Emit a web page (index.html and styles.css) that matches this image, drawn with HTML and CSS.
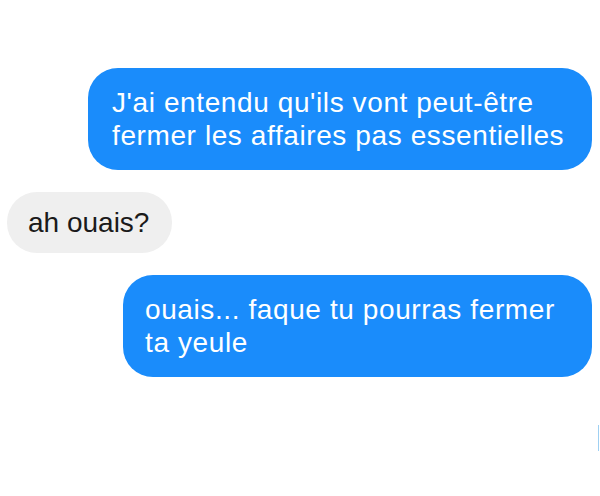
FILE: index.html
```html
<!DOCTYPE html>
<html lang="fr">
<head>
    <meta charset="UTF-8">
    <title>Messages</title>
    <link rel="stylesheet" href="styles.css">
</head>
<body>
    <div class="chat">
        <div class="bubble sent">J'ai entendu qu'ils vont peut-être<br>fermer les affaires pas essentielles</div>
        <div class="bubble received">ah ouais?</div>
        <div class="bubble sent sent-short">ouais... faque tu pourras fermer<br>ta yeule</div>
    </div>
    <div class="edge"></div>
</body>
</html>
```

FILE: styles.css
```css
body {
    margin: 0;
    background-color: #ffffff;
    font-family: 'Liberation Sans', Arial, sans-serif;
    width: 600px;
    height: 496px;
    position: relative;
    overflow: hidden;
}

.chat {
    display: flex;
    flex-direction: column;
    padding: 68px 8px 0 7px;
    gap: 22px;
}

.bubble {
    font-size: 28px;
    line-height: 33px;
    border-radius: 30px;
    box-sizing: border-box;
    white-space: nowrap;
}

.sent {
    align-self: flex-end;
    background-color: #1a8cfb;
    color: #ffffff;
    width: 504px;
    padding: 18px 20px 18px 24px;
    letter-spacing: 0.6px;
}

.sent-short {
    width: 469px;
    padding-left: 22px;
}

.received {
    align-self: flex-start;
    background-color: #efefef;
    color: #1a1a1a;
    padding: 14px 23px 14px 21px;
}

.edge {
    position: absolute;
    right: 1px;
    top: 425px;
    width: 1px;
    height: 26px;
    background-color: #9fd0f2;
}
```
